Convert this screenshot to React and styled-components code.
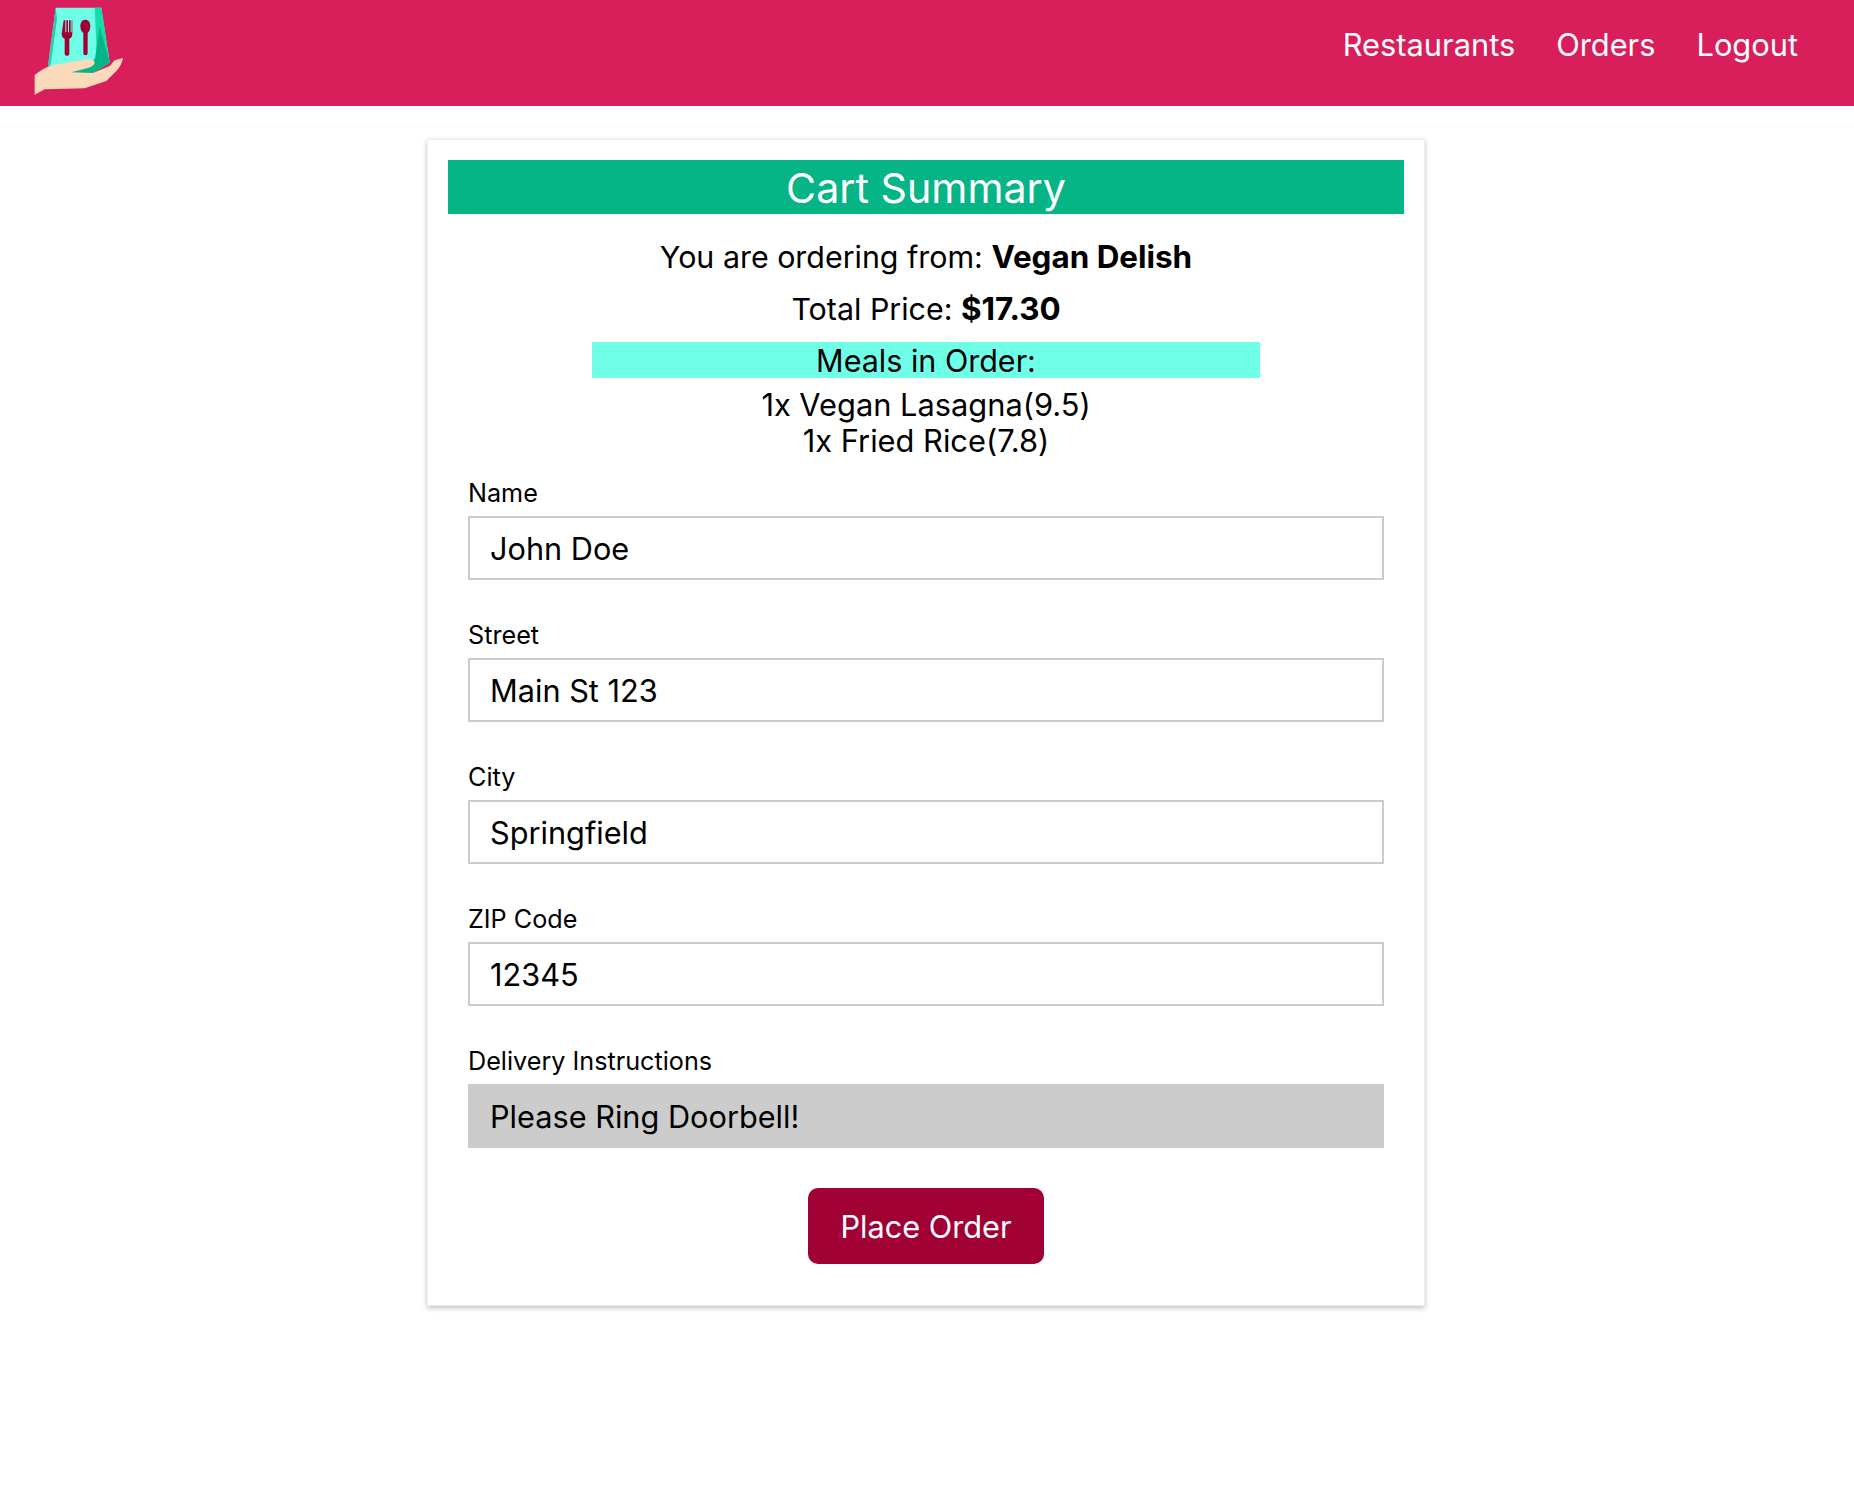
import React from "react";
import styled, { createGlobalStyle } from "styled-components";

const Global = createGlobalStyle`
  * { box-sizing: border-box; }
  html, body { margin: 0; background: #fff; }
  body { font-family: Inter, "Noto Sans", "Liberation Sans", sans-serif; color: #000; min-height: 1492px; }
`;

const Header = styled.header`
  height: 106px;
  background: #d81e5b;
  display: flex;
  align-items: center;
  justify-content: space-between;
  padding: 0 56px 0 33px;
`;
const LogoSvg = styled.svg`
  width: 92px;
  height: 90px;
  display: block;
  margin-top: -4px;
`;
const Nav = styled.nav`
  display: flex;
  gap: 41px;
  margin-top: -17px;
`;
const NavLink = styled.a`
  color: #fff;
  font-size: 30.8px;
  line-height: 36px;
  text-decoration: none;
`;
const Page = styled.div`
  padding-right: 2px;
`;
const Card = styled.main`
  width: 998px;
  margin: 33px auto 0;
  padding: 20px 20px 41px;
  background: #fff;
  border: 1px solid #eee;
  box-shadow: 0 2px 5px rgba(0, 0, 0, 0.25);
  text-align: center;
`;
const Title = styled.h1`
  margin: 0 0 25px;
  height: 54px;
  background: #05b586;
  color: #fff;
  font-size: 41.2px;
  line-height: 57px;
  font-weight: 400;
`;
const Line = styled.p`
  margin: 0 0 16px;
  font-size: 30.4px;
  line-height: 36px;
  &:nth-of-type(2) { margin-bottom: 15px; }
  b { font-weight: 700; font-size: 31.4px; }
`;
const MealsHeading = styled.h2`
  width: 668px;
  height: 36px;
  margin: 0 auto 9px;
  background: #6fffe9;
  font-size: 30.5px;
  line-height: 37px;
  font-weight: 400;
`;
const Meal = styled.div`
  font-size: 30.8px;
  line-height: 36px;
`;
const Form = styled.form`
  margin: 19px 20px 0;
  text-align: left;
`;
const Field = styled.div`
  margin-bottom: 40px;
`;
const Label = styled.label`
  display: block;
  font-size: 25.2px;
  line-height: 31px;
  margin-bottom: 7px;
`;
const Input = styled.input`
  display: block;
  width: 100%;
  height: 64px;
  padding: 0 20px;
  background: #fff;
  border: 2px solid #ccc;
  border-radius: 0;
  color: #000;
  font: 400 30.7px Inter, "Noto Sans", sans-serif;
  outline: none;
`;
const FilledInput = styled(Input)`
  background: #ccc;
`;
const Actions = styled.div`
  display: flex;
  justify-content: center;
`;
const Button = styled.button`
  width: 236px;
  height: 76px;
  background: #a10035;
  color: #fff;
  border: 0;
  border-radius: 10px;
  font: 400 30.7px Inter, "Noto Sans", sans-serif;
`;

const Logo = () => (
  <LogoSvg viewBox="100 15 276 270" aria-hidden="true">
    <polygon points="168,20 305,20 330,185 280,215 145,195" fill="#6fffe9" />
    <polygon points="168,20 145,195 152,197 172,55" fill="#2fc9a5" />
    <polygon points="285,20 305,20 330,185 280,215 292,170" fill="#12dcaa" />
    <polygon points="300,75 330,185 280,215" fill="#05b586" />
    <polygon points="210,216 292,170 280,216" fill="#05b586" />
    <path d="M192 58h5v36h3V58h5v36h3V58h5v36h3V58h2v40q0 12-9 15v46q0 5-5 5h-3q-6 0-6-5v-46q-9-3-9-15z" fill="#a10035" />
    <path d="M257 56c9 0 15 8 15 20 0 11-5 18-8 20v60q0 7-7 7-6 0-6-7V96c-4-2-9-9-9-20 0-12 6-20 15-20z" fill="#a10035" />
    <path d="M105 222C130 205 150 190 175 190L262 175Q285 173 285 186Q283 196 262 202L215 214L280 216L330 195L345 178L370 171Q365 195 350 210L320 240L255 262L135 265L105 281Z" fill="#fbd9bb" />
  </LogoSvg>
);

const fields = [
  ["Name", "John Doe"],
  ["Street", "Main St 123"],
  ["City", "Springfield"],
  ["ZIP Code", "12345"],
];

export default function App() {
  return (
    <>
      <Global />
      <Header>
        <Logo />
        <Nav>
          <NavLink href="#">Restaurants</NavLink>
          <NavLink href="#">Orders</NavLink>
          <NavLink href="#">Logout</NavLink>
        </Nav>
      </Header>
      <Page>
        <Card>
          <Title>Cart Summary</Title>
          <Line>You are ordering from: <b>Vegan Delish</b></Line>
          <Line>Total Price: <b>$17.30</b></Line>
          <MealsHeading>Meals in Order:</MealsHeading>
          <Meal>1x Vegan Lasagna(9.5)</Meal>
          <Meal>1x Fried Rice(7.8)</Meal>
          <Form>
            {fields.map(([label, value]) => (
              <Field key={label}>
                <Label>{label}</Label>
                <Input defaultValue={value} />
              </Field>
            ))}
            <Field>
              <Label>Delivery Instructions</Label>
              <FilledInput defaultValue="Please Ring Doorbell!" />
            </Field>
            <Actions>
              <Button type="button">Place Order</Button>
            </Actions>
          </Form>
        </Card>
      </Page>
    </>
  );
}
